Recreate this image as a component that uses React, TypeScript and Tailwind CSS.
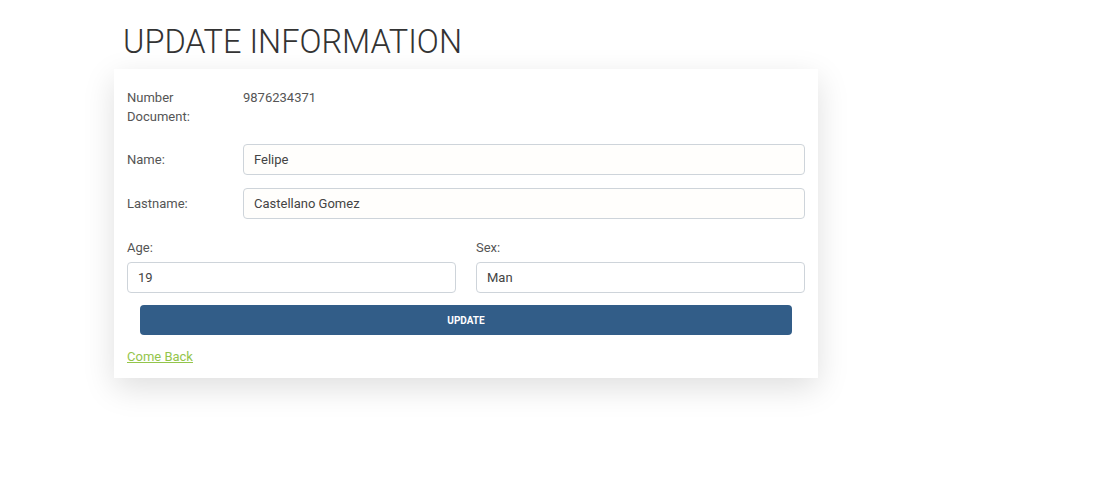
export default function App() {
  return (
    <div className="min-h-[503px] w-[1102px] bg-white font-['Roboto',sans-serif] text-[13px] text-[#444]">
      <div className="pl-[114px] pt-[22px]">
        <h1 className="ml-[9px] h-[47px] text-[32.5px] font-light leading-[41px] text-[#333]">UPDATE INFORMATION</h1>
        <div className="w-[704px] bg-white px-[13px] pt-[19px] pb-[12px] shadow-[0_10px_30px_rgba(0,0,0,0.13)]">
          <div className="flex">
            <div className="w-[116px] leading-[19px] text-[#555]">Number<br />Document:</div>
            <div className="leading-[19px] text-[#555]">9876234371</div>
          </div>
          <div className="mt-[18px] flex items-center">
            <div className="w-[116px] text-[#555]">Name:</div>
            <div className="flex h-[31px] flex-1 items-center rounded-[4px] border border-[#ced4da] bg-[#fffefc] px-[10px] text-[#444]">Felipe</div>
          </div>
          <div className="mt-[13px] flex items-center">
            <div className="w-[116px] text-[#555]">Lastname:</div>
            <div className="flex h-[31px] flex-1 items-center rounded-[4px] border border-[#ced4da] bg-[#fffefc] px-[10px] text-[#444]">Castellano Gomez</div>
          </div>
          <div className="mt-[19px] grid grid-cols-2 gap-x-[20px]">
            <div>
              <div className="leading-[19px] text-[#555]">Age:</div>
              <div className="mt-[5px] flex h-[31px] items-center rounded-[4px] border border-[#ced4da] px-[10px] text-[#444]">19</div>
            </div>
            <div>
              <div className="leading-[19px] text-[#555]">Sex:</div>
              <div className="mt-[5px] flex h-[31px] items-center rounded-[4px] border border-[#ced4da] px-[10px] text-[#444]">Man</div>
            </div>
          </div>
          <div className="mx-[13px] mt-[12px] flex h-[30px] items-center justify-center rounded-[4px] bg-[#325d88] text-[10px] font-bold text-white">UPDATE</div>
          <div className="mt-[12px] leading-[19px]">
            <a className="text-[#93c54b] underline">Come Back</a>
          </div>
        </div>
      </div>
    </div>
  );
}
